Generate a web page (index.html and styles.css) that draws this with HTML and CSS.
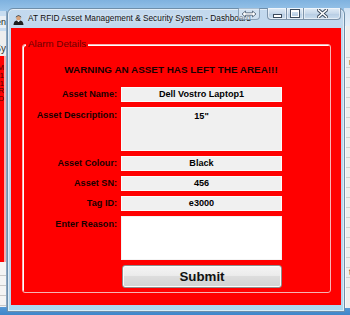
FILE: index.html
```html
<!DOCTYPE html>
<html lang="en">
<head>
  <meta charset="UTF-8">
  <meta name="viewport" content="width=device-width, initial-scale=1.0">
  <title>AT RFID Asset Management &amp; Security System - Dashboard</title>
  <link rel="stylesheet" href="styles.css">
</head>
<body>

<div class="desktop">
  <!-- windows behind the dashboard -->
  <div class="back-window back-left">
    <div class="bl-title">en</div>
    <div class="bl-menu">Sy</div>
    <div class="bl-red">M<br>1<br>1<br>R<br>D</div>
    <div class="bl-list">
      <div class="row"></div>
      <div class="row"></div>
      <div class="row"></div>
      <div class="row"></div>
    </div>
  </div>

  <div class="back-window back-right">
    <div class="br-frame"></div>
    <div class="br-list">
      <div class="row"></div>
      <div class="row">n</div>
      <div class="row"></div>
      <div class="row"></div>
      <div class="row"></div>
      <div class="row"></div>
      <div class="row"></div>
      <div class="row"></div>
      <div class="row"></div>
      <div class="row"></div>
      <div class="row"></div>
      <div class="row"></div>
      <div class="row"></div>
      <div class="row"></div>
      <div class="row"></div>
      <div class="row"></div>
      <div class="row"></div>
      <div class="row"></div>
      <div class="row"></div>
      <div class="row"></div>
      <div class="row"></div>
      <div class="row"></div>
      <div class="row">t</div>
      <div class="row"></div>
    </div>
  </div>

  <!-- dashboard window -->
  <div class="window">
    <div class="titlebar">
      <svg class="app-icon" width="11" height="12" viewBox="0 0 11 12">
        <path d="M2.5 4.2 Q5.5 0.2 8.5 4.2 Z" fill="#2a2a2a"/>
        <ellipse cx="5.5" cy="5.2" rx="2.2" ry="2.3" fill="#d9a27a"/>
        <path d="M0.5 12 Q0.8 7.8 3.6 7.4 L5.5 9 L7.4 7.4 Q10.2 7.8 10.5 12 Z" fill="#1e1e1e"/>
        <path d="M4.4 7.6 L5.5 9 L6.6 7.6 Z" fill="#ffffff"/>
      </svg>
      <span class="title">AT RFID Asset Management &amp; Security System - Dashboard</span>
      <div class="caption-buttons">
        <div class="cap-btn cap-min"><span class="min-glyph"></span></div>
        <div class="cap-btn cap-max"><span class="max-glyph"></span></div>
        <div class="cap-btn cap-close">
          <svg width="11" height="9" viewBox="0 0 11 9">
            <path d="M1.5 1 L9.5 8 M9.5 1 L1.5 8" stroke="#3b4a5c" stroke-width="3.4" stroke-linecap="square"/>
            <path d="M1.5 1 L9.5 8 M9.5 1 L1.5 8" stroke="#ffffff" stroke-width="1.6" stroke-linecap="square"/>
          </svg>
        </div>
      </div>
      <div class="snap-btn">
        <svg width="16" height="8" viewBox="0 0 16 8">
          <path d="M1 4 L4.5 1 L4.5 2.8 L11.5 2.8 L11.5 1 L15 4 L11.5 7 L11.5 5.2 L4.5 5.2 L4.5 7 Z" fill="#ffffff" stroke="#56677a" stroke-width="0.9"/>
        </svg>
      </div>
    </div>

    <div class="client">
      <div class="alarm">
        <span class="legend">Alarm Details</span>
        <h1 class="warning">WARNING AN ASSET HAS LEFT THE AREA!!!</h1>
        <div class="form">
          <label class="lbl">Asset Name:</label>
          <div class="field">Dell Vostro Laptop1</div>

          <label class="lbl lbl-top">Asset Description:</label>
          <div class="field field-tall">15"</div>

          <label class="lbl">Asset Colour:</label>
          <div class="field">Black</div>

          <label class="lbl">Asset SN:</label>
          <div class="field">456</div>

          <label class="lbl">Tag ID:</label>
          <div class="field">e3000</div>

          <label class="lbl lbl-top">Enter Reason:</label>
          <textarea class="reason"></textarea>

          <span></span>
          <button class="submit">Submit</button>
        </div>
      </div>
    </div>
  </div>
</div>

</body>
</html>
```

FILE: styles.css
```css
body {
  margin: 0;
  padding: 0;
  font-family: "Liberation Sans", Arial, sans-serif;
}

.desktop {
  position: relative;
  width: 350px;
  height: 315px;
  overflow: hidden;
  background: linear-gradient(#7fb2df 0%, #9cc6ea 4%, #b3d3ef 12%, #b3d3ef 94%, #4f93d2 98%, #3f86c9 100%);
}

/* ---------- windows in the background ---------- */
.back-window {
  position: absolute;
  display: flex;
  flex-direction: column;
  overflow: hidden;
}

.back-left {
  left: -60px;
  top: 11px;
  width: 67px;
  height: 296px;
  background: #c7dcf0;
  border-right: 1px solid #8aa6c2;
  box-sizing: border-box;
}

.bl-title {
  height: 12px;
  margin-top: 5px;
  background: #e9eef4;
  color: #222;
  font-size: 9px;
  line-height: 12px;
  text-align: right;
}

.bl-menu {
  height: 25px;
  margin-top: 3px;
  background: #eeeeee;
  color: #333;
  font-size: 10px;
  line-height: 36px;
  text-align: right;
}

.bl-red {
  height: 206px;
  background: #ff0000;
  color: #4a0000;
  font-size: 8px;
  line-height: 7.8px;
  text-align: right;
  padding-top: 8px;
  box-sizing: border-box;
  border-right: 2px solid #f2b0b0;
}

.bl-list {
  flex: 1;
  background: #f4f4f4;
  padding-top: 4px;
}

.bl-list .row {
  height: 9px;
  border-bottom: 1px solid #c9c9c9;
}

.back-right {
  left: 344px;
  top: 8px;
  width: 40px;
  height: 300px;
  background: #dde9f5;
}

.br-frame {
  height: 18px;
  background: linear-gradient(#cfe1f3, #e6eff8);
}

.br-list {
  flex: 1;
  background: #eeeeee;
  border-left: 2px solid #fafafa;
  padding-top: 22px;
}

.br-list .row {
  height: 9px;
  border-bottom: 1px solid #d2d2d2;
  font-size: 9px;
  line-height: 9px;
  color: #333;
  padding-left: 3px;
}

/* ---------- dashboard window ---------- */
.window {
  position: absolute;
  left: 7px;
  top: 8px;
  width: 338px;
  height: 304px;
  box-sizing: border-box;
  display: flex;
  flex-direction: column;
  padding: 0 3px 6px 3px;
  border: 1px solid #6f8ea9;
  border-radius: 6px 6px 0 0;
  background: linear-gradient(#c3d9ee, #bcd5ec 20%, #b8d4ec 95%, #a9dcf2 100%);
  box-shadow: inset 0 0 0 1px rgba(255, 255, 255, 0.55);
}

.titlebar {
  position: relative;
  height: 19px;
  display: flex;
  align-items: flex-start;
}

.app-icon {
  margin: 4px 0 0 2px;
  flex-shrink: 0;
}

.title {
  margin: 4px 0 0 4px;
  font-size: 8.3px;
  line-height: 10px;
  color: #111;
  white-space: nowrap;
  text-shadow: 0 0 4px rgba(255, 255, 255, 0.9);
}

.caption-buttons {
  margin-left: auto;
  margin-top: -1px;
  display: flex;
}

.cap-btn {
  height: 12px;
  box-sizing: border-box;
  border: 1px solid #7e94ab;
  border-top: none;
  background: linear-gradient(#e3edf7, #c6d8ea 50%, #b6cce3 51%, #c9dced);
  display: flex;
  align-items: center;
  justify-content: center;
  box-shadow: inset 0 0 0 1px rgba(255, 255, 255, 0.5);
}

.cap-min {
  width: 20px;
  border-radius: 0 0 0 4px;
}

.cap-max {
  width: 17px;
  border-left: none;
}

.cap-close {
  width: 37px;
  border-left: none;
  border-radius: 0 0 4px 0;
}

.min-glyph {
  width: 7px;
  height: 2px;
  margin-top: 4px;
  background: #fff;
  border: 1px solid #3b4a5c;
}

.max-glyph {
  width: 6px;
  height: 4px;
  border: 1px solid #fff;
  border-top-width: 2px;
  outline: 1px solid #3b4a5c;
}

.snap-btn {
  position: absolute;
  left: 227px;
  top: -1px;
  width: 22px;
  height: 12px;
  box-sizing: border-box;
  border: 1px solid rgba(110, 135, 160, 0.7);
  border-top: none;
  border-radius: 0 0 4px 4px;
  background: rgba(220, 232, 244, 0.55);
  display: flex;
  align-items: center;
  justify-content: center;
}

.client {
  flex: 1;
  background: #ff0000;
  padding: 16px 10px 0 11px;
}

/* ---------- alarm group box ---------- */
.alarm {
  position: relative;
  width: 309px;
  box-sizing: border-box;
  padding: 0 0 4px 0;
  border: 1px solid #f6b4b4;
  border-radius: 3px;
  box-shadow: inset 1px 1px 0 #ffffff;
}

/* caption sits on the top border line */
.legend {
  position: absolute;
  left: 3px;
  top: -7px;
  padding: 0 2px;
  background: #ff0000;
  font-size: 9.8px;
  line-height: 12px;
  color: #6e0000;
}

.warning {
  margin: 19px 11px 11px 0;
  font-size: 9.9px;
  line-height: 12px;
  font-weight: bold;
  text-align: center;
  color: #1a0000;
}

.form {
  display: grid;
  grid-template-columns: 94px 161px;
  grid-template-rows: 15px 44px 15px 15px 15px 44px 23px;
  column-gap: 4px;
  row-gap: 5px;
}

.lbl {
  align-self: center;
  text-align: right;
  font-size: 9.1px;
  font-weight: bold;
  line-height: 11px;
  color: #1a0000;
  white-space: nowrap;
}

.lbl-top {
  align-self: start;
  padding-top: 3px;
}

.field {
  box-sizing: border-box;
  background: #f0f0f0;
  border: 1px solid #fbfbfb;
  font-size: 9.1px;
  font-weight: bold;
  line-height: 13px;
  text-align: center;
  color: #000;
}

.field-tall {
  padding-top: 2px;
}

.reason {
  box-sizing: border-box;
  margin: 0;
  padding: 0;
  width: 161px;
  height: 44px;
  resize: none;
  background: #ffffff;
  border: 1px solid #f4f4f4;
}

.submit {
  margin-left: 1px;
  width: 160px;
  height: 23px;
  box-sizing: border-box;
  padding: 0;
  font-family: "Liberation Sans", Arial, sans-serif;
  font-size: 13.3px;
  font-weight: bold;
  color: #111;
  border: 1px solid #8e8e8e;
  border-radius: 3px;
  background: linear-gradient(#f4f4f4, #ececec 45%, #dddddd 50%, #d2d2d2);
  box-shadow: inset 0 0 0 1px #fcfcfc;
}
```
